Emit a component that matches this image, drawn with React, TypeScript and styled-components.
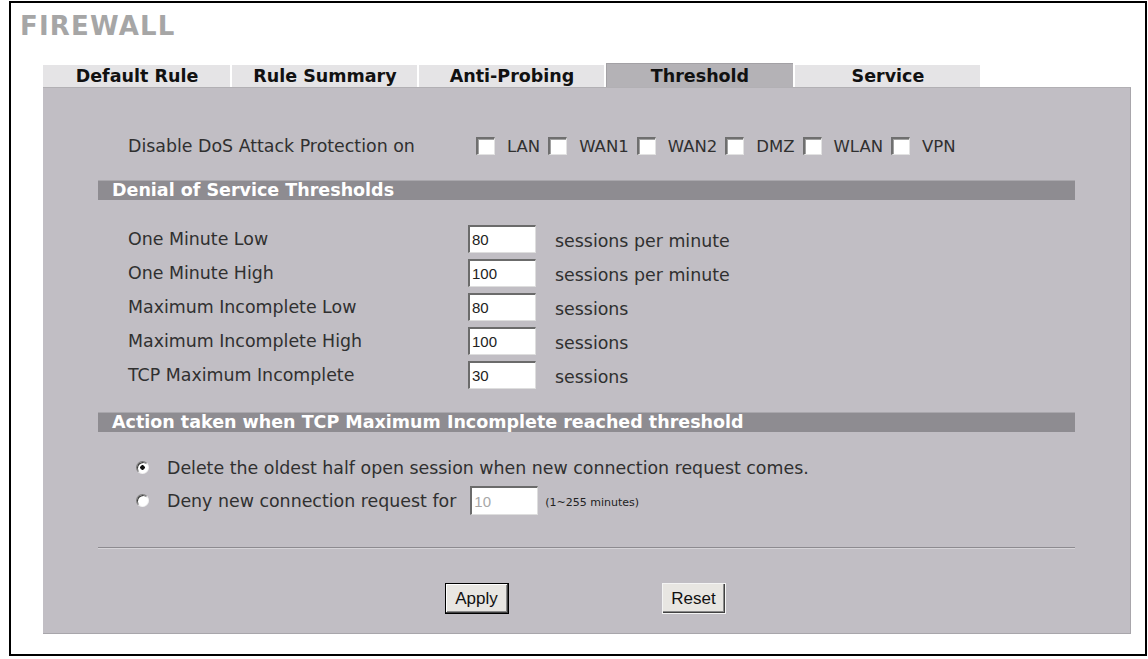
import React from "react";
import styled, { createGlobalStyle } from "styled-components";

const GlobalStyle = createGlobalStyle`
  html, body {
    margin: 0;
    padding: 0;
    background: #ffffff;
  }
  body {
    font-family: "DejaVu Sans", Verdana, sans-serif;
    color: #303030;
  }
  * { box-sizing: border-box; }
`;

const Frame = styled.div`
  margin: 1px 0 0 9px;
  width: 1138px;
  height: 655px;
  border: 2px solid #000;
  background: #fff;
  display: flex;
  flex-direction: column;
  padding-left: 32px;
  overflow: hidden;
`;

const Title = styled.h1`
  margin: 8px 0 0 -23px;
  font-family: "DejaVu Sans", Verdana, sans-serif;
  font-weight: bold;
  font-size: 26px;
  line-height: 30px;
  letter-spacing: 1.2px;
  color: #a6a6a6;
`;

const TabBar = styled.div`
  margin-top: 22px;
  height: 24px;
  display: flex;
  align-items: flex-end;
  gap: 2px;
`;

const Tab = styled.div<{ $active?: boolean; $w: number }>`
  width: ${(p) => p.$w}px;
  height: ${(p) => (p.$active ? 24 : 22)}px;
  padding-top: ${(p) => (p.$active ? 2 : 0)}px;
  background: ${(p) => (p.$active ? "#b4b2b6" : "#e5e4e6")};
  border-top: 1px solid ${(p) => (p.$active ? "#a3a1a5" : "#e5e4e6")};
  border-left: 1px solid ${(p) => (p.$active ? "#a3a1a5" : "#e5e4e6")};
  font-weight: bold;
  font-size: 17.5px;
  line-height: 21px;
  text-align: center;
  color: #111;
`;

const Panel = styled.div`
  width: 1088px;
  background: #c1bec4;
  border-top: 1px solid #b2b0b4;
  border-right: 1px solid #a8a6ab;
  border-bottom: 1px solid #a8a6ab;
  padding: 43px 55px 19px 55px;
  display: flex;
  flex-direction: column;
`;

const DosRow = styled.div`
  height: 30px;
  padding-left: 30px;
  display: flex;
  align-items: center;
`;

const FieldLabel = styled.span<{ $w: number }>`
  width: ${(p) => p.$w}px;
  flex: none;
  font-size: 17.4px;
  white-space: nowrap;
`;

const Checkbox = styled.input.attrs({ type: "checkbox" })`
  appearance: none;
  margin: 0;
  width: 19px;
  height: 18px;
  background: #fff;
  border-style: solid;
  border-width: 2px 1px 1px 2px;
  border-color: #6f6f6f #e2e2e2 #e2e2e2 #6f6f6f;
  box-shadow: inset 1px 1px 0 #a0a0a0;
  flex: none;
`;

const CheckLabel = styled.span`
  font-size: 16.5px;
  margin: 0 8px 0 12px;
  white-space: nowrap;
`;

const SectionBar = styled.div<{ $mt: number }>`
  margin-top: ${(p) => p.$mt}px;
  height: 20px;
  background: #8e8c91;
  border-top: 1px solid #a9a7ac;
  color: #fff;
  font-weight: bold;
  font-size: 17.5px;
  line-height: 18px;
  padding-left: 14px;
  white-space: nowrap;
`;

const ThresholdList = styled.div`
  margin-top: 22px;
  padding-left: 30px;
  display: flex;
  flex-direction: column;
`;

const ThresholdRow = styled.div`
  height: 34px;
  display: flex;
  align-items: center;
`;

const NumberInput = styled.input`
  width: 68px;
  height: 28px;
  margin: 0;
  padding: 0 0 0 2px;
  background: #fff;
  border-style: solid;
  border-width: 2px 1px 1px 2px;
  border-color: #6b6b6b #dedede #dedede #6b6b6b;
  font-family: "Liberation Sans", Arial, sans-serif;
  font-size: 15px;
  color: #222;
  outline: none;
  flex: none;
  &:disabled {
    color: #a8a8a8;
    background: #fff;
  }
`;

const Unit = styled.span`
  margin-left: 19px;
  font-size: 17.4px;
  white-space: nowrap;
  padding-top: 4px;
`;

const RadioList = styled.div`
  margin-top: 19px;
  padding-left: 30px;
  display: flex;
  flex-direction: column;
`;

const RadioRow = styled.label`
  height: 33px;
  display: flex;
  align-items: center;
`;

const Radio = styled.input.attrs({ type: "radio" })`
  appearance: none;
  margin: 0 0 0 8px;
  width: 13px;
  height: 13px;
  border-radius: 50%;
  border-style: solid;
  border-width: 1px;
  border-color: #7a7a7a #f2f2f2 #f2f2f2 #7a7a7a;
  background: #fff;
  box-shadow: inset 1px 1px 0 #3c3c3c;
  flex: none;
  &:checked {
    background: radial-gradient(circle, #111 0 2px, #fff 2.5px);
  }
`;

const RadioText = styled.span`
  margin-left: 18px;
  font-size: 17.4px;
  white-space: nowrap;
`;

const InlineInput = styled(NumberInput)`
  margin-left: 14px;
  height: 29px;
`;

const SmallNote = styled.span`
  margin-left: 7px;
  font-size: 11px;
  white-space: nowrap;
  color: #222;
  padding-top: 4px;
`;

const Separator = styled.hr`
  margin: 30px 0 0 0;
  height: 2px;
  border: none;
  border-top: 1px solid #8d8b90;
  border-bottom: 1px solid #d6d4d8;
`;

const ButtonBar = styled.div`
  margin-top: 34px;
  display: flex;
  justify-content: center;
  gap: 153px;
  padding-right: 3px;
`;

const Button = styled.button<{ $primary?: boolean }>`
  width: 64px;
  height: 31px;
  margin: 0;
  padding: 0;
  background: #e8e6e2;
  border: 1px solid ${(p) => (p.$primary ? "#000" : "#f4f4f4")};
  box-shadow: ${(p) =>
    p.$primary
      ? "inset -1px -1px 0 #404040, inset 1px 1px 0 #fff, inset -2px -2px 0 #8a8a8a"
      : "inset -1px -1px 0 #404040, inset -2px -2px 0 #8a8a8a"};
  font-family: "Liberation Sans", Arial, sans-serif;
  font-size: 17px;
  color: #111;
`;

const tabs = [
  { label: "Default Rule", w: 187 },
  { label: "Rule Summary", w: 185 },
  { label: "Anti-Probing", w: 185 },
  { label: "Threshold", w: 187, active: true },
  { label: "Service", w: 185 },
];

const ifaces = ["LAN", "WAN1", "WAN2", "DMZ", "WLAN", "VPN"];

const thresholds = [
  { label: "One Minute Low", value: "80", unit: "sessions per minute" },
  { label: "One Minute High", value: "100", unit: "sessions per minute" },
  { label: "Maximum Incomplete Low", value: "80", unit: "sessions" },
  { label: "Maximum Incomplete High", value: "100", unit: "sessions" },
  { label: "TCP Maximum Incomplete", value: "30", unit: "sessions" },
];

export default function App() {
  return (
    <>
      <GlobalStyle />
      <Frame>
        <Title>FIREWALL</Title>
        <TabBar>
          {tabs.map((t) => (
            <Tab key={t.label} $w={t.w} $active={t.active}>
              {t.label}
            </Tab>
          ))}
        </TabBar>
        <Panel>
          <DosRow>
            <FieldLabel $w={348}>Disable DoS Attack Protection on</FieldLabel>
            {ifaces.map((n) => (
              <React.Fragment key={n}>
                <Checkbox aria-label={n} />
                <CheckLabel>{n}</CheckLabel>
              </React.Fragment>
            ))}
          </DosRow>

          <SectionBar $mt={19}>Denial of Service Thresholds</SectionBar>
          <ThresholdList>
            {thresholds.map((r) => (
              <ThresholdRow key={r.label}>
                <FieldLabel $w={340}>{r.label}</FieldLabel>
                <NumberInput defaultValue={r.value} />
                <Unit>{r.unit}</Unit>
              </ThresholdRow>
            ))}
          </ThresholdList>

          <SectionBar $mt={20}>
            Action taken when TCP Maximum Incomplete reached threshold
          </SectionBar>
          <RadioList>
            <RadioRow>
              <Radio name="act" defaultChecked />
              <RadioText>
                Delete the oldest half open session when new connection request comes.
              </RadioText>
            </RadioRow>
            <RadioRow>
              <Radio name="act" />
              <RadioText>Deny new connection request for</RadioText>
              <InlineInput defaultValue="10" disabled />
              <SmallNote>(1~255 minutes)</SmallNote>
            </RadioRow>
          </RadioList>

          <Separator />
          <ButtonBar>
            <Button $primary>Apply</Button>
            <Button>Reset</Button>
          </ButtonBar>
        </Panel>
      </Frame>
    </>
  );
}
